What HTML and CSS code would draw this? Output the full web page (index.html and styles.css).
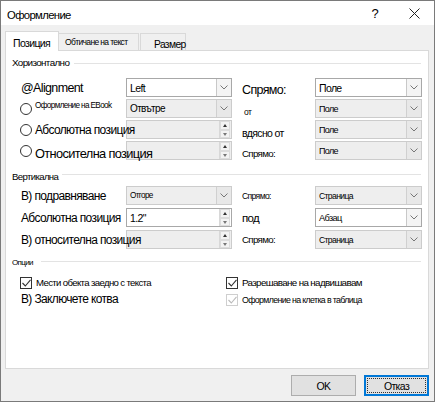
FILE: index.html
```html
<!DOCTYPE html>
<html>
<head>
<meta charset="utf-8">
<link rel="stylesheet" href="styles.css">
</head>
<body>
<div class="win">
  <div class="titlebar">
    <span class="title">Оформление</span>
    <span class="help">?</span>
    <svg class="close" width="11" height="11" viewBox="0 0 11 11"><path d="M0.5 0.5 L10.5 10.5 M10.5 0.5 L0.5 10.5" stroke="#222" stroke-width="1"/></svg>
  </div>
  <div class="body">
    <div class="tabs">
      <div class="tab active">Позиция</div>
      <div class="tab t2">Обтичане на текст</div>
      <div class="tab t3">Размер</div>
    </div>
    <div class="panel">
      <div class="ghead"><span class="gh1">Хоризонтално</span><i class="rule"></i></div>
      <div class="rows hrows">
        <div class="row">
          <div class="lab big">@Alignment</div>
          <div class="combo white"><span class="val v105">Left</span><span class="dd"><svg width="8" height="5" viewBox="0 0 8 5"><path d="M0.5 0.5 L4 4 L7.5 0.5" fill="none" stroke="#777"/></svg></span></div>
          <div class="lab2 s125 low">Спрямо:</div>
          <div class="combo white"><span class="val v105">Поле</span><span class="dd"><svg width="8" height="5" viewBox="0 0 8 5"><path d="M0.5 0.5 L4 4 L7.5 0.5" fill="none" stroke="#777"/></svg></span></div>
        </div>
        <div class="row">
          <div class="lab"><span class="radio"></span><span class="tiny">Оформление на EBook</span></div>
          <div class="combo gray"><span class="val v10">Отвътре</span><span class="dd"><svg width="8" height="5" viewBox="0 0 8 5"><path d="M0.5 0.5 L4 4 L7.5 0.5" fill="none" stroke="#777"/></svg></span></div>
          <div class="lab2 s85 low2 ot">от</div>
          <div class="combo gray"><span class="val v9">Поле</span><span class="dd"><svg width="8" height="5" viewBox="0 0 8 5"><path d="M0.5 0.5 L4 4 L7.5 0.5" fill="none" stroke="#777"/></svg></span></div>
        </div>
        <div class="row">
          <div class="lab over"><span class="radio"></span><span class="big2">Абсолютна позиция</span></div>
          <div class="spin gray"><span class="val"></span><span class="sp"><span class="up"></span><span class="dn"></span></span></div>
          <div class="lab2 s10 low2">вдясно от</div>
          <div class="combo gray"><span class="val v9">Поле</span><span class="dd"><svg width="8" height="5" viewBox="0 0 8 5"><path d="M0.5 0.5 L4 4 L7.5 0.5" fill="none" stroke="#777"/></svg></span></div>
        </div>
        <div class="row">
          <div class="lab over"><span class="radio"></span><span class="big3 low">Относителна позиция</span></div>
          <div class="spin gray"><span class="val"></span><span class="sp"><span class="up"></span><span class="dn"></span></span></div>
          <div class="lab2 s97 low2">Спрямо:</div>
          <div class="combo gray"><span class="val v9">Поле</span><span class="dd"><svg width="8" height="5" viewBox="0 0 8 5"><path d="M0.5 0.5 L4 4 L7.5 0.5" fill="none" stroke="#777"/></svg></span></div>
        </div>
      </div>

      <div class="ghead vhead"><span class="gh2">Вертикална</span><i class="rule"></i></div>
      <div class="rows vrows">
        <div class="row">
          <div class="lab s12 ind">В) подравняване</div>
          <div class="combo gray"><span class="val v82">Отгоре</span><span class="dd"><svg width="8" height="5" viewBox="0 0 8 5"><path d="M0.5 0.5 L4 4 L7.5 0.5" fill="none" stroke="#777"/></svg></span></div>
          <div class="lab2 s86">Спрямо:</div>
          <div class="combo gray"><span class="val v86">Страница</span><span class="dd"><svg width="8" height="5" viewBox="0 0 8 5"><path d="M0.5 0.5 L4 4 L7.5 0.5" fill="none" stroke="#777"/></svg></span></div>
        </div>
        <div class="row">
          <div class="lab s12 ind">Абсолютна позиция</div>
          <div class="spin white"><span class="val v105">1.2"</span><span class="sp"><span class="up"></span><span class="dn"></span></span></div>
          <div class="lab2 s115">под</div>
          <div class="combo white"><span class="val v92">Абзац</span><span class="dd"><svg width="8" height="5" viewBox="0 0 8 5"><path d="M0.5 0.5 L4 4 L7.5 0.5" fill="none" stroke="#777"/></svg></span></div>
        </div>
        <div class="row">
          <div class="lab s12 ind over">В) относителна позиция</div>
          <div class="spin gray"><span class="val"></span><span class="sp"><span class="up"></span><span class="dn"></span></span></div>
          <div class="lab2 s97">Спрямо:</div>
          <div class="combo gray"><span class="val v86">Страница</span><span class="dd"><svg width="8" height="5" viewBox="0 0 8 5"><path d="M0.5 0.5 L4 4 L7.5 0.5" fill="none" stroke="#777"/></svg></span></div>
        </div>
      </div>

      <div class="ghead ohead"><span class="gh3">Опции</span><i class="rule"></i></div>
      <div class="opts">
        <div class="ocol">
          <div class="chk"><span class="box"><svg width="9" height="8" viewBox="0 0 9 8"><path d="M0.5 4 L3.3 7 L8.5 0.8" fill="none" stroke="#333" stroke-width="1.1"/></svg></span><span class="s96">Мести обекта заедно с текста</span></div>
          <div class="plain">В) Заключете котва</div>
        </div>
        <div class="ocol">
          <div class="chk"><span class="box"><svg width="9" height="8" viewBox="0 0 9 8"><path d="M0.5 4 L3.3 7 L8.5 0.8" fill="none" stroke="#333" stroke-width="1.1"/></svg></span><span class="s98">Разрешаване на надвишавам</span></div>
          <div class="chk dis"><span class="box"><svg width="9" height="8" viewBox="0 0 9 8"><path d="M0.5 4 L3.3 7 L8.5 0.8" fill="none" stroke="#bbb" stroke-width="1.1"/></svg></span><span class="s88">Оформление на клетка в таблица</span></div>
        </div>
      </div>
    </div>
    <div class="buttons">
      <div class="btn">OK</div>
      <div class="btn def"><span class="focus">Отказ</span></div>
    </div>
  </div>
</div>
</body>
</html>
```
FILE: styles.css
```css
* { box-sizing: border-box; }
html, body { margin: 0; padding: 0; background: #ffffff; }
body {
  font-family: "Liberation Sans", Arial, sans-serif;
  letter-spacing: -0.04em;
  color: #000;
}

.win {
  width: 435px;
  height: 402px;
  border: 1px solid #7a7a7a;
  display: flex;
  flex-direction: column;
  background: #f0f0f0;
}
.titlebar {
  height: 24px;
  background: #fff;
  display: flex;
  align-items: center;
}
.title { font-size: 11.3px; margin-left: 6px; margin-top: 3px; }
.help { font-size: 13px; margin-left: auto; margin-right: 31px; margin-top: 1px; }
.close { margin-right: 14px; }

.body { flex: 1; display: flex; flex-direction: column; }

.tabs {
  display: flex;
  align-items: flex-end;
  height: 25px;
  padding-left: 4px;
}
.tab {
  height: 17px;
  border: 1px solid #d9d9d9;
  border-bottom: none;
  background: #f0f0f0;
  white-space: nowrap;
}
.tab.active {
  width: 54px;
  height: 20px;
  background: #fff;
  font-size: 10.5px;
  padding-left: 7px;
  line-height: 22px;
  position: relative;
  z-index: 2;
  margin-bottom: -1px;
}
.tab.t2 { width: 80px; font-size: 8.5px; padding-left: 6px; line-height: 16px; border-left: none; }
.tab.t3 { width: 46px; font-size: 10.3px; padding-left: 13px; line-height: 22px; margin-left: 1px; }

.panel {
  margin-left: 4px;
  width: 424px;
  height: 319px;
  border: 1px solid #d9d9d9;
  background: #fff;
  padding: 4px 7px 0 6px;
  position: relative;
  z-index: 1;
}

.ghead {
  display: flex;
  align-items: center;
  height: 14px;
}
.gh1 { font-size: 9.9px; }
.gh2 { font-size: 9.6px; }
.gh3 { font-size: 8px; }
.ghead .rule { flex: 1; height: 1px; background: #e3e3e3; margin-left: 5px; margin-top: 2px; }
.vhead { margin-top: 9px; }
.vhead .rule { margin-left: 4px; margin-top: -3px; }
.ohead { margin-top: 6px; }
.ohead .rule { margin-top: -1px; margin-left: 8px; }

.rows { display: flex; flex-direction: column; }
.hrows { margin-top: 9px; gap: 2px; }
.vrows { margin-top: 3px; gap: 3px; }

.row {
  display: grid;
  grid-template-columns: 114px 106px 83px 107px;
  height: 19px;
  align-items: center;
}

.lab {
  display: flex;
  align-items: center;
  white-space: nowrap;
  padding-left: 8px;
  position: relative;
  z-index: 2;
  height: 19px;
}
.lab.ind { padding-left: 9px; }
.big { font-size: 12.5px; padding-left: 9px; }
.big2 { font-size: 12px; margin-left: 3px; }
.big3 { font-size: 12.8px; margin-left: 3px; }
.low { margin-top: 5px; }
.tiny { font-size: 8.2px; margin-left: 3px; margin-top: -7px; }

.radio {
  width: 12px;
  height: 12px;
  border: 1px solid #333;
  border-radius: 50%;
  background: #fff;
  flex: none;
}

.lab2 { padding-left: 10px; white-space: nowrap; }
.lab2.low { margin-top: 5px; }
.lab2.low2 { margin-top: 6px; }
.lab2.ot { padding-left: 12px; }

.s85 { font-size: 8.5px; }
.s86 { font-size: 8.6px; }
.s88 { font-size: 8.8px; }
.s96 { font-size: 9.6px; }
.s97 { font-size: 9.7px; }
.s98 { font-size: 9.8px; }
.s10 { font-size: 10.5px; }
.s115 { font-size: 11.5px; }
.s12 { font-size: 12px; }
.s125 { font-size: 12.5px; }

.combo, .spin {
  height: 19px;
  border: 1px solid #bcbcbc;
  display: flex;
  align-items: center;
  position: relative;
  z-index: 1;
}
.combo.white, .spin.white { background: #fff; border-color: #a8a8a8; }
.combo.gray, .spin.gray { background: #eeeeee; border-color: #cccccc; }

.val { flex: 1; padding-left: 3px; white-space: nowrap; }
.v82 { font-size: 8.2px; }
.v86 { font-size: 8.6px; }
.v9 { font-size: 9px; }
.v92 { font-size: 9.2px; }
.v10 { font-size: 10px; }
.v105 { font-size: 10.5px; }

.dd {
  width: 15px;
  height: 17px;
  border-left: 1px solid #d0d0d0;
  display: flex;
  align-items: center;
  justify-content: center;
}
.combo.white .dd { border-left-color: #c8c8c8; background: #f4f4f4; }
.combo.gray .dd { background: #e8e8e8; }

.sp {
  width: 11px;
  height: 17px;
  display: flex;
  flex-direction: column;
  border-left: 1px solid #d8d8d8;
  margin-right: 1px;
}
.sp .up, .sp .dn {
  flex: 1;
  position: relative;
  background: #f3f3f3;
  border: 1px solid #dcdcdc;
}
.sp .up::after, .sp .dn::after {
  content: "";
  position: absolute;
  left: 2px;
  width: 0; height: 0;
  border-left: 2.5px solid transparent;
  border-right: 2.5px solid transparent;
}
.sp .up::after { top: 2px; border-bottom: 3px solid #333; }
.sp .dn::after { top: 2px; border-top: 3px solid #777; }

.opts {
  display: grid;
  grid-template-columns: 206px 1fr;
  margin-top: 5px;
}
.ocol { display: flex; flex-direction: column; padding-left: 8px; }
.chk { display: flex; align-items: center; height: 17px; white-space: nowrap; }
.box {
  width: 12px;
  height: 12px;
  border: 1px solid #333;
  background: #fff;
  display: flex;
  align-items: center;
  justify-content: center;
  margin-right: 4px;
  flex: none;
}
.chk.dis .box { border-color: #cfcfcf; }
.plain { font-size: 12px; padding-left: 1px; height: 17px; line-height: 17px; }

.buttons {
  display: flex;
  justify-content: flex-end;
  gap: 8px;
  padding: 6px 5px 0 0;
}
.btn {
  width: 65px;
  height: 21px;
  border: 1px solid #adadad;
  background: #e1e1e1;
  font-size: 10.5px;
  display: flex;
  align-items: center;
  justify-content: center;
}
.btn.def {
  border: 2px solid #0078d7;
  padding: 1px;
}
.btn.def .focus {
  flex: 1;
  align-self: stretch;
  border: 1px dotted #333;
  display: flex;
  align-items: center;
  justify-content: center;
}
```
